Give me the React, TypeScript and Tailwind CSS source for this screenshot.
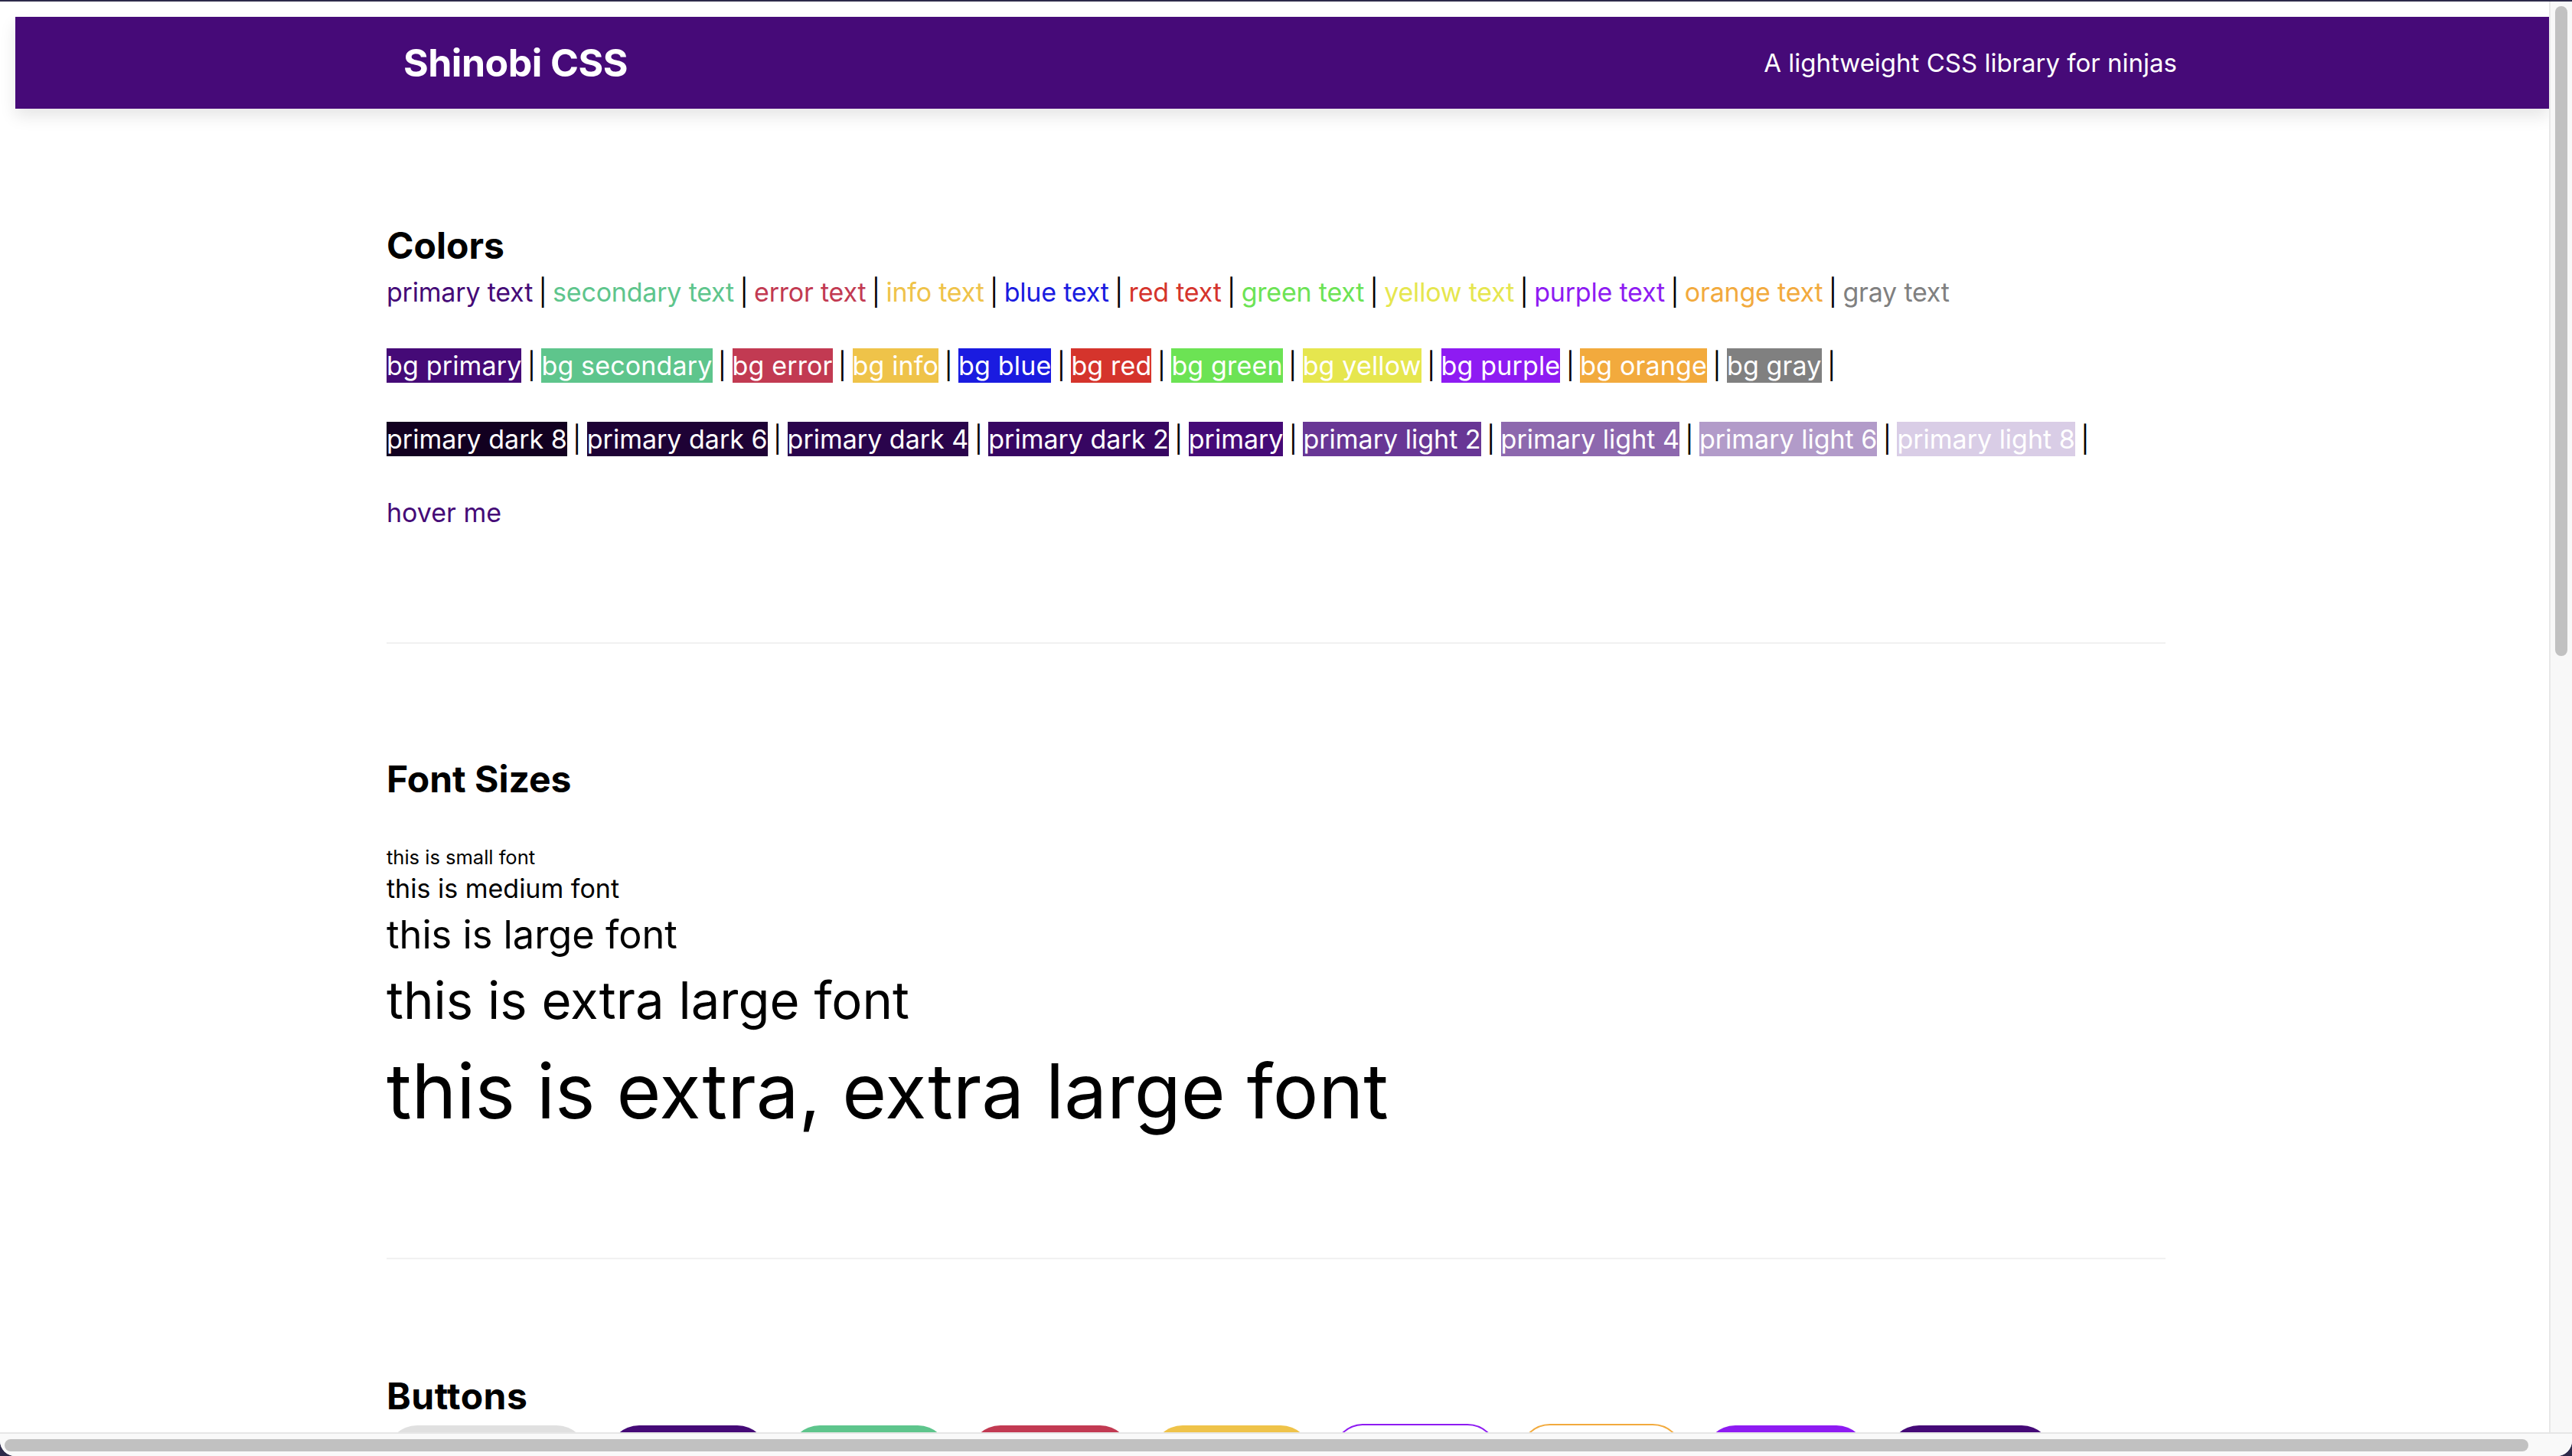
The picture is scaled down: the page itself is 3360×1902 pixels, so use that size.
// Shinobi CSS demo page — header, colour swatches, font sizes, buttons.
// The screenshot is a 2x retina capture, so every size here is doubled.

const textColors = [
  { label: "primary text", cls: "text-[#450a77]" },
  { label: "secondary text", cls: "text-[#5ec58c]" },
  { label: "error text", cls: "text-[#c23a52]" },
  { label: "info text", cls: "text-[#efc349]" },
  { label: "blue text", cls: "text-[#1a1be0]" },
  { label: "red text", cls: "text-[#d5342c]" },
  { label: "green text", cls: "text-[#6ce354]" },
  { label: "yellow text", cls: "text-[#e6e64e]" },
  { label: "purple text", cls: "text-[#8e1bf2]" },
  { label: "orange text", cls: "text-[#f2aa3d]" },
  { label: "gray text", cls: "text-[#808080]" },
];

const bgColors = [
  { label: "bg primary", cls: "bg-[#450a77]" },
  { label: "bg secondary", cls: "bg-[#5ec58c]" },
  { label: "bg error", cls: "bg-[#c23a52]" },
  { label: "bg info", cls: "bg-[#efc349]" },
  { label: "bg blue", cls: "bg-[#1a1be0]" },
  { label: "bg red", cls: "bg-[#d5342c]" },
  { label: "bg green", cls: "bg-[#6ce354]" },
  { label: "bg yellow", cls: "bg-[#e6e64e]" },
  { label: "bg purple", cls: "bg-[#8e1bf2]" },
  { label: "bg orange", cls: "bg-[#f2aa3d]" },
  { label: "bg gray", cls: "bg-[#808080]" },
];

const shades = [
  { label: "primary dark 8", cls: "bg-[#120020]" },
  { label: "primary dark 6", cls: "bg-[#1e0235]" },
  { label: "primary dark 4", cls: "bg-[#2a044c]" },
  { label: "primary dark 2", cls: "bg-[#370662]" },
  { label: "primary", cls: "bg-[#450a77]" },
  { label: "primary light 2", cls: "bg-[#683695]" },
  { label: "primary light 4", cls: "bg-[#8d68ae]" },
  { label: "primary light 6", cls: "bg-[#b29bc9]" },
  { label: "primary light 8", cls: "bg-[#d9cde6]" },
];

const buttons = [
  "w-[262px] bg-[#e0e0e0]",
  "w-[208px] bg-[#450a77]",
  "w-[208px] bg-[#5ec58c]",
  "w-[210px] bg-[#c23a52]",
  "w-[208px] bg-[#efc349]",
  "w-[216px] -mt-[2px] border-2 border-[#8e1bf2] bg-white",
  "w-[214px] -mt-[2px] border-2 border-[#f2aa3d] bg-white",
  "w-[212px] bg-[#8e1bf2]",
  "w-[214px] bg-[#450a77]",
];

function Chip({ label, cls }: { label: string; cls: string }) {
  return (
    <span className={`inline-block leading-[45px] text-white ${cls}`}>
      {label}
    </span>
  );
}

function Sep() {
  return (
    <span className="inline-block w-[26px] text-center tracking-normal text-black">|</span>
  );
}

export default function App() {
  return (
    <div className="h-[1902px] w-[3360px] overflow-hidden bg-[#2d2a4a] font-['Inter',sans-serif] text-black">
      <div className="mt-[2px] flex h-[1900px] flex-col overflow-hidden rounded-b-[20px] bg-white">
        <div className="flex min-h-0 flex-1">
          {/* Page */}
          <div className="min-w-0 flex-1 overflow-hidden">
            <header className="ml-[20px] mt-[20px] flex h-[120px] items-center justify-between bg-[#460a78] pl-[507px] pr-[486px] text-white shadow-[0_10px_20px_rgba(0,0,0,0.10)]">
              <h1 className="text-[50px] font-bold leading-[58px] tracking-[-0.5px]">
                Shinobi CSS
              </h1>
              <p className="text-[33px] leading-[48px]">
                A lightweight CSS library for ninjas
              </p>
            </header>

            <main className="ml-[505px] w-[2324px] text-[34px]">
              {/* Colors */}
              <section className="pb-[145px] pt-[150px]">
                <h2 className="text-[48px] font-bold leading-[58px]">Colors</h2>
                <p className="mt-[8px] h-[48px] leading-[48px] tracking-[-0.2px]">
                  {textColors.map((c, i) => (
                    <span key={c.label}>
                      {i > 0 && <Sep />}
                      <span className={c.cls}>{c.label}</span>
                    </span>
                  ))}
                </p>
                <p className="mt-[48px] h-[48px] leading-[48px] tracking-[0.15px]">
                  {bgColors.map((c) => (
                    <span key={c.label}>
                      <Chip {...c} />
                      <Sep />
                    </span>
                  ))}
                </p>
                <p className="mt-[48px] h-[48px] leading-[48px]">
                  {shades.map((c) => (
                    <span key={c.label}>
                      <Chip {...c} />
                      <Sep />
                    </span>
                  ))}
                </p>
                <p className="mt-[48px] h-[48px] leading-[48px] text-[#450a77]">hover me</p>
              </section>

              <hr className="border-0 border-t-2 border-[#f1f1f1]" />

              {/* Font sizes */}
              <section className="pb-[150px] pt-[148px]">
                <h2 className="text-[48px] font-bold leading-[58px]">Font Sizes</h2>
                <p className="mt-[56px] text-[25.5px] leading-[34px]">this is small font</p>
                <p className="text-[34px] leading-[48px]">this is medium font</p>
                <p className="text-[50.5px] leading-[72px]">this is large font</p>
                <p className="text-[67px] leading-[100px]">this is extra large font</p>
                <p className="text-[99.5px] leading-[136px]">this is extra, extra large font</p>
              </section>

              <hr className="border-0 border-t-2 border-[#f1f1f1]" />

              {/* Buttons */}
              <section className="pt-[150px]">
                <h2 className="text-[48px] font-bold leading-[58px] tracking-[0.5px]">Buttons</h2>
                <div className="mt-[9px] flex gap-[28px]">
                  {buttons.map((b, i) => (
                    <div key={i} className={`h-[80px] rounded-[40px] ${b}`} />
                  ))}
                </div>
              </section>
            </main>
          </div>

          {/* Vertical scrollbar */}
          <div className="w-[30px] shrink-0 border-l-2 border-[#e8e8e8] bg-[#f8f8f8] pl-[6px] pt-[6px]">
            <div className="h-[849px] w-[16px] rounded-full bg-[#c1c1c1]" />
          </div>
        </div>

        {/* Horizontal scrollbar */}
        <div className="h-[31px] shrink-0 border-t-2 border-[#e6e6e6] bg-[#f9f9f9] px-[6px] pt-[7px]">
          <div className="h-[16px] w-[3297px] rounded-full bg-[#c1c1c1]" />
        </div>
      </div>
    </div>
  );
}
